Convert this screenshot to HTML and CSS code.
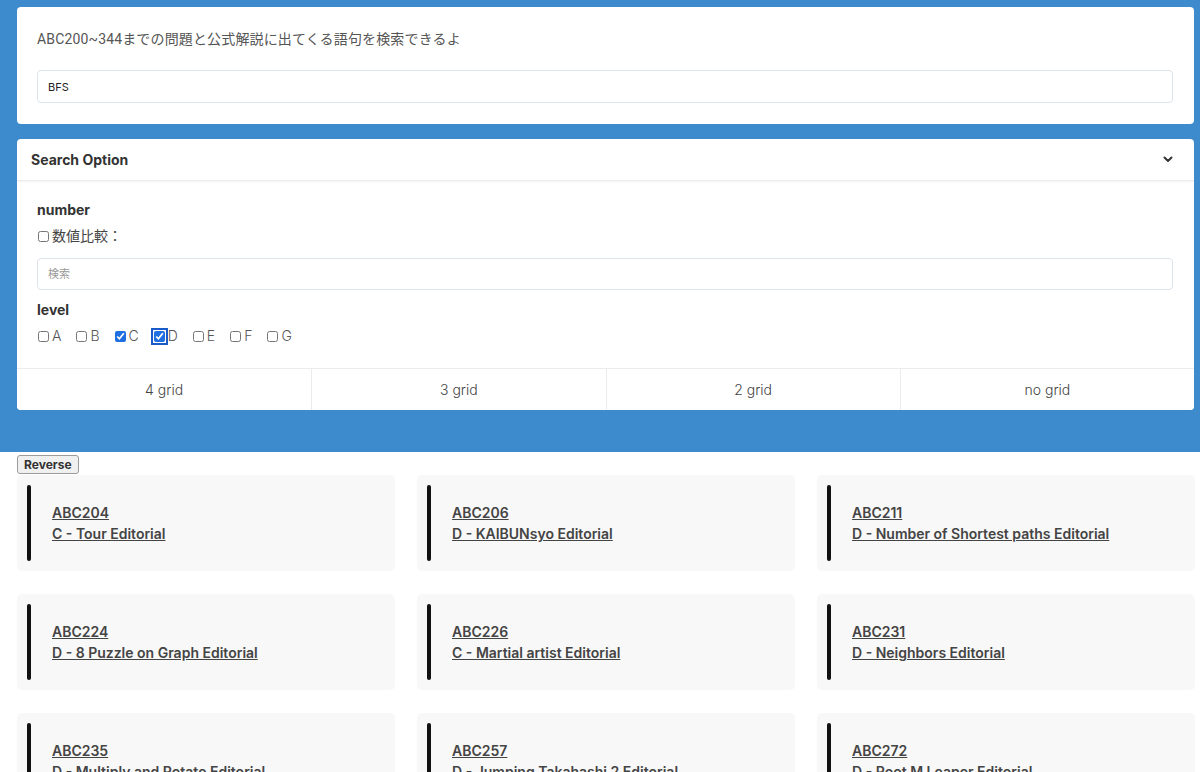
FILE: index.html
```html
<!DOCTYPE html>
<html lang="ja">
<head>
<meta charset="utf-8">
<title>ABC Search</title>
<link rel="stylesheet" href="styles.css">
</head>
<body>
<div class="hero">
  <div class="card top-card">
    <p class="lead">ABC200~344までの問題と公式解説に出てくる語句を検索できるよ</p>
    <input class="text-input" type="text" value="BFS">
  </div>
  <div class="card option-card">
    <div class="option-head">
      <span class="option-title">Search Option</span>
      <svg class="chev" width="10" height="7" viewBox="0 0 10 7"><polyline points="1.5,1.5 5,5 8.5,1.5" fill="none" stroke="#333" stroke-width="2" stroke-linecap="round" stroke-linejoin="round"/></svg>
    </div>
    <div class="option-body">
      <div class="label">number</div>
      <label class="check-line"><input type="checkbox"> 数値比較：</label>
      <input class="text-input small" type="text" placeholder="検索">
      <div class="label level">level</div>
      <div class="levels">
        <label class="lv"><input type="checkbox">A</label>
        <label class="lv"><input type="checkbox">B</label>
        <label class="lv"><input type="checkbox" checked>C</label>
        <label class="lv"><input class="focused" type="checkbox" checked>D</label>
        <label class="lv"><input type="checkbox">E</label>
        <label class="lv"><input type="checkbox">F</label>
        <label class="lv"><input type="checkbox">G</label>
      </div>
    </div>
    <div class="grid-btns">
      <button class="gbtn">4 grid</button>
      <button class="gbtn">3 grid</button>
      <button class="gbtn">2 grid</button>
      <button class="gbtn">no grid</button>
    </div>
  </div>
</div>
<div class="results">
  <button class="reverse">Reverse</button>
  <div class="cards">
    <div class="item"><div class="bar"></div><div class="txt"><a href="#">ABC204</a><a href="#">C - Tour Editorial</a></div></div>
    <div class="item"><div class="bar"></div><div class="txt"><a href="#">ABC206</a><a href="#">D - KAIBUNsyo Editorial</a></div></div>
    <div class="item"><div class="bar"></div><div class="txt"><a href="#">ABC211</a><a href="#">D - Number of Shortest paths Editorial</a></div></div>
    <div class="item"><div class="bar"></div><div class="txt"><a href="#">ABC224</a><a href="#">D - 8 Puzzle on Graph Editorial</a></div></div>
    <div class="item"><div class="bar"></div><div class="txt"><a href="#">ABC226</a><a href="#">C - Martial artist Editorial</a></div></div>
    <div class="item"><div class="bar"></div><div class="txt"><a href="#">ABC231</a><a href="#">D - Neighbors Editorial</a></div></div>
    <div class="item"><div class="bar"></div><div class="txt"><a href="#">ABC235</a><a href="#">D - Multiply and Rotate Editorial</a></div></div>
    <div class="item"><div class="bar"></div><div class="txt"><a href="#">ABC257</a><a href="#">D - Jumping Takahashi 2 Editorial</a></div></div>
    <div class="item"><div class="bar"></div><div class="txt"><a href="#">ABC272</a><a href="#">D - Root M Leaper Editorial</a></div></div>
  </div>
</div>
</body>
</html>
```
FILE: styles.css
```css
* { box-sizing: border-box; }
html, body { margin: 0; padding: 0; background: #fff; }
body {
  font-family: Inter, "Noto Sans CJK JP", sans-serif;
  font-size: 14px;
  color: #333;
  overflow: hidden;
}
.hero {
  background: #3d8bcd;
  padding: 7px 6px 42px 17px;
  display: flex;
  flex-direction: column;
  gap: 15px;
}
.card {
  background: #fff;
  border-radius: 4px;
}
.top-card {
  padding: 22px 21px 21px 20px;
}
.lead {
  margin: 0 0 21px 0;
  line-height: 20px;
  font-size: 14px;
  letter-spacing: 0.15px;
  font-family: Roboto, "Noto Sans CJK JP", sans-serif;
  color: #555;
}
.text-input {
  display: block;
  width: 100%;
  height: 33px;
  border: 1px solid #dde3ea;
  border-radius: 4px;
  padding: 0 10px;
  font-family: Inter, "Noto Sans CJK JP", sans-serif;
  font-size: 11px;
  color: #222;
  background: #fff;
  outline: none;
}
.text-input.small { height: 32px; margin-top: 12px; }
.text-input::placeholder { color: #999; }
.option-card { overflow: hidden; }
.option-head {
  height: 42px;
  display: flex;
  align-items: center;
  justify-content: space-between;
  padding: 0 21px 0 14px;
  border-bottom: 1px solid #ececec;
  box-shadow: 0 1px 2px rgba(0,0,0,0.05);
}
.option-title { font-weight: 700; font-size: 14px; color: #333; }
.chev { margin-top: 0; }
.option-body {
  padding: 19px 21px 22px 20px;
}
.label { font-weight: 700; font-size: 14px; line-height: 20px; color: #333; }
.label.level { margin-top: 10px; }
.check-line {
  display: flex;
  align-items: center;
  margin-top: 6px;
  line-height: 20px;
  color: #444;
  font-size: 14px;
  font-family: Roboto, "Noto Sans CJK JP", sans-serif;
}
.check-line input { margin: 0 3px 0 1px; width: 11px; height: 11px; }
.levels { display: flex; align-items: center; height: 20px; margin-top: 6px; }
.lv { display: flex; align-items: center; margin-right: 14px; color: #555; font-size: 14px; line-height: 20px; font-weight: 300; }
.lv input { margin: 0 3px 0 1px; width: 11px; height: 11px; accent-color: #1f6fe0; }
.lv input.focused { outline: 2px solid #1a5bc8; outline-offset: 1px; border-radius: 2px; }
.grid-btns {
  display: grid;
  grid-template-columns: repeat(4, 1fr);
  border-top: 1px solid #ececec;
}
.gbtn {
  height: 41px;
  border: none;
  border-left: 1px solid #ececec;
  background: #fff;
  font-family: Inter, sans-serif;
  font-weight: 300;
  font-size: 14px;
  color: #444;
}
.gbtn:first-child { border-left: none; }
.results { padding: 3px 0 0 17px; }
.reverse {
  display: block;
  height: 19px;
  padding: 0 6px;
  font-family: Inter, sans-serif;
  font-size: 12px;
  font-weight: 700;
  color: #333;
  background: #f0f0f0;
  border: 1px solid #9a9a9a;
  border-radius: 3px;
}
.cards {
  margin: 1px 0 0 0;
  display: grid;
  grid-template-columns: repeat(3, 378px);
  column-gap: 22px;
  row-gap: 23px;
}
.item {
  height: 96px;
  background: #f8f8f8;
  border-radius: 5px;
  padding: 10px;
  display: flex;
  align-items: center;
}
.bar {
  width: 4px;
  height: 76px;
  background: #111;
  border-radius: 2px;
  flex: none;
}
.txt {
  margin-left: 21px;
  display: flex;
  flex-direction: column;
}
.txt a {
  font-weight: 600;
  font-size: 14px;
  line-height: 21px;
  color: #444;
  text-decoration: underline;
}
```
